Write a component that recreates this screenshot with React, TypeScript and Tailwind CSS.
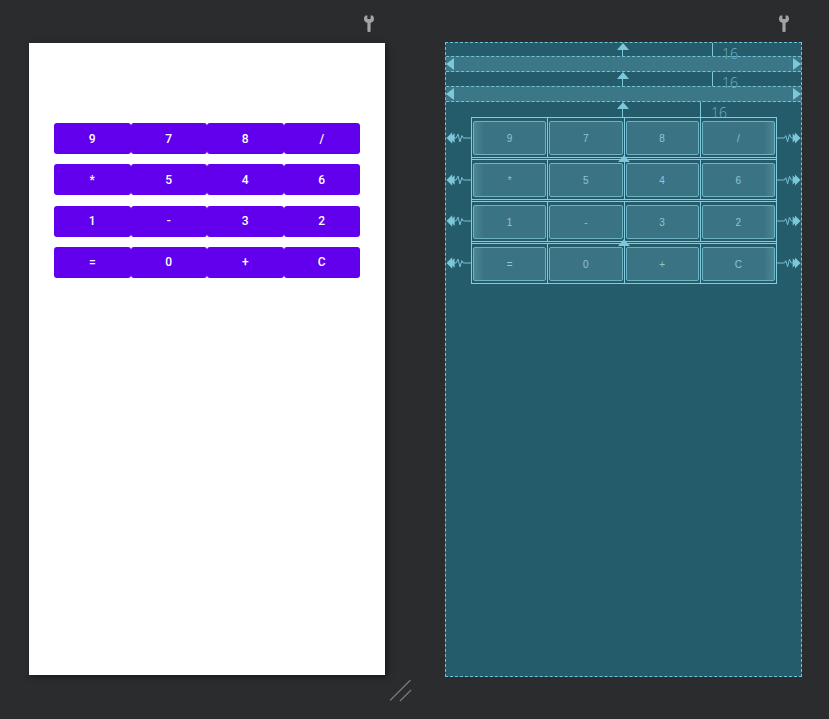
const rows = [
  ["9", "7", "8", "/"],
  ["*", "5", "4", "6"],
  ["1", "-", "3", "2"],
  ["=", "0", "+", "C"],
];

function Wrench() {
  return (
    <svg width="10" height="17" viewBox="0 0 10 17">
      <path
        d="M1.5 0.5 C0.4 1.4 0 2.6 0 4 C0 6 1.4 7.4 3.4 7.9 L3.4 16 Q3.4 17 4.4 17 L5.6 17 Q6.6 17 6.6 16 L6.6 7.9 C8.6 7.4 10 6 10 4 C10 2.6 9.6 1.4 8.5 0.5 L6.6 0.5 L6.6 4 L3.4 4 L3.4 0.5 Z"
        fill="#a3a3a3"
      />
    </svg>
  );
}

function Zig({ side }: { side: "l" | "r" }) {
  return (
    <svg width="26" height="16" viewBox="0 0 26 16" className={side === "r" ? "-scale-x-100" : ""}>
      <path d="M0.5 8 L6.5 2 L6.5 14 Z" fill="#7cc8da" />
      <path d="M3.5 8 L9 3 L9 13 Z" fill="#7cc8da" />
      <path d="M8 8 L10.5 8 L12.5 4 L14.5 12 L16.5 5.5 L18 8 L26 8" stroke="#7cc8da" strokeWidth="1" fill="none" />
    </svg>
  );
}

function UpArrow() {
  return (
    <svg width="12" height="8" viewBox="0 0 12 8">
      <path d="M6 0 L12 7 L0 7 Z" fill="#7cc8da" />
    </svg>
  );
}

function Band() {
  return (
    <div className="h-[16px] flex items-center justify-between bg-[#3c7787] border-y border-dashed border-[#74c3d5]">
      <div className="w-0 h-0 border-y-[6px] border-y-transparent border-r-[8px] border-r-[#7cc8da]" />
      <div className="w-0 h-0 border-y-[6px] border-y-transparent border-l-[8px] border-l-[#7cc8da]" />
    </div>
  );
}

function Strip({ h, lineX, labelX }: { h: string; lineX: string; labelX: string }) {
  return (
    <div className={`relative ${h}`}>
      <div className="absolute left-[171px] top-0">
        <UpArrow />
      </div>
      <div className="absolute left-[176px] top-[6px] bottom-0 w-px bg-[#7cc8da]" />
      <div className={`absolute ${lineX} top-0 bottom-0 w-px bg-[#7cc8da]`} />
      <div
        className={`absolute ${labelX} top-[4px] text-[14px] leading-none font-light text-[#6fb0c1] font-['Open_Sans',sans-serif]`}
      >
        16
      </div>
    </div>
  );
}

export default function App() {
  return (
    <div className="relative w-[829px] h-[719px] bg-[#2b2c2e] flex pl-[29px] gap-[60px] overflow-hidden font-['Roboto',sans-serif]">
      {/* design view */}
      <div className="w-[356px] flex flex-col">
        <div className="h-[43px] flex justify-end pr-[11px] pt-[15px]">
          <Wrench />
        </div>
        <div className="h-[632px] bg-white shadow-[2px_2px_6px_rgba(0,0,0,0.5)] pt-[80px] px-[25px] flex flex-col gap-[10.3px]">
          {rows.map((r, i) => (
            <div key={i} className="flex h-[31px]">
              {r.map((k) => (
                <div
                  key={k}
                  className="flex-1 rounded-[3px] bg-[#6200ee] text-white text-[12px] font-medium flex items-center justify-center"
                >
                  {k}
                </div>
              ))}
            </div>
          ))}
        </div>
      </div>

      {/* resize handle */}
      <svg className="absolute left-[388px] top-[677px]" width="26" height="26" viewBox="0 0 26 26">
        <path d="M2 23.5 L22.5 3" stroke="#7a7a7a" strokeWidth="1.3" />
        <path d="M12 24 L23 13" stroke="#7a7a7a" strokeWidth="1.3" />
      </svg>

      {/* blueprint view */}
      <div className="w-[357px] flex flex-col">
        <div className="h-[42px] flex justify-end pr-[13px] pt-[15px]">
          <Wrench />
        </div>
        <div className="h-[635px] bg-[#245c6c] border border-dashed border-[#74c3d5] flex flex-col">
          <Strip h="h-[13px]" lineX="left-[266px]" labelX="left-[276px]" />
          <Band />
          <Strip h="h-[14px]" lineX="left-[266px]" labelX="left-[276px]" />
          <Band />
          <Strip h="h-[15px]" lineX="left-[254px]" labelX="left-[265px]" />
          <div className="flex items-stretch">
            <div className="w-[25px] flex flex-col">
              {rows.map((_, i) => (
                <div key={i} className="flex-1 flex items-center">
                  <Zig side="l" />
                </div>
              ))}
            </div>
            <div className="relative w-[306px] h-[167px] border border-[#80cde0] flex flex-col">
              {rows.map((r, i) => (
                <div
                  key={i}
                  className={`flex-1 flex ${i < 3 ? "border-b-[3px] border-double border-[#80cde0]" : ""}`}
                >
                  {r.map((k, j) => (
                    <div
                      key={k}
                      className={`flex-1 px-[1px] pt-[3px] pb-[2px] ${j < 3 ? "border-r border-[#80cde0]" : ""}`}
                    >
                      <div
                        className={`h-full rounded-[2px] border border-[#6fb2c3] flex items-center justify-center text-[10px] text-[#8cc6d4] font-['Liberation_Sans',sans-serif] ${
                          j === 0
                            ? "bg-gradient-to-r from-[#4b8695] to-[#3a7484] to-[14%]"
                            : j === 3
                            ? "bg-gradient-to-l from-[#4b8695] to-[#3a7484] to-[14%]"
                            : "bg-[#3a7484]"
                        }`}
                      >
                        {k}
                      </div>
                    </div>
                  ))}
                </div>
              ))}
              <div className="absolute left-[146px] top-[37px]">
                <UpArrow />
              </div>
              <div className="absolute left-[146px] top-[121px]">
                <UpArrow />
              </div>
            </div>
            <div className="w-[24px] flex flex-col">
              {rows.map((_, i) => (
                <div key={i} className="flex-1 flex items-center">
                  <Zig side="r" />
                </div>
              ))}
            </div>
          </div>
        </div>
      </div>
    </div>
  );
}
